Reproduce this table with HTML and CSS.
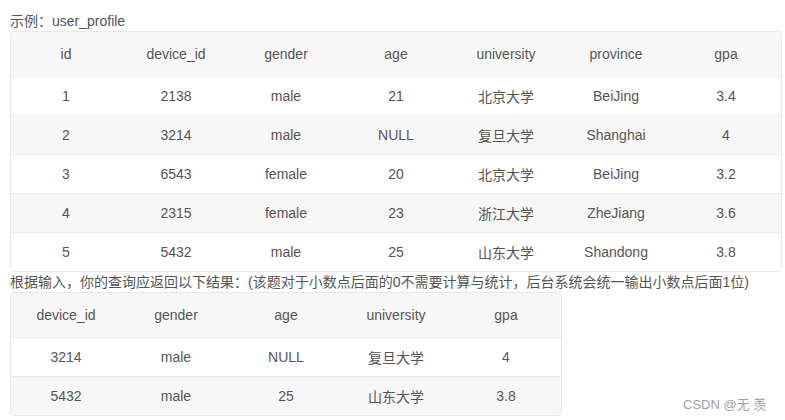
FILE: index.html
```html
<!DOCTYPE html>
<html lang="zh">
<head>
<meta charset="utf-8">
<link rel="stylesheet" href="styles.css">
</head>
<body>
<div class="page">
  <p class="caption">示例：user_profile</p>
  <table class="grid wide">
    <thead>
      <tr><th>id</th><th>device_id</th><th>gender</th><th>age</th><th>university</th><th>province</th><th>gpa</th></tr>
    </thead>
    <tbody>
      <tr><td>1</td><td>2138</td><td>male</td><td>21</td><td>北京大学</td><td>BeiJing</td><td>3.4</td></tr>
      <tr><td>2</td><td>3214</td><td>male</td><td>NULL</td><td>复旦大学</td><td>Shanghai</td><td>4</td></tr>
      <tr><td>3</td><td>6543</td><td>female</td><td>20</td><td>北京大学</td><td>BeiJing</td><td>3.2</td></tr>
      <tr><td>4</td><td>2315</td><td>female</td><td>23</td><td>浙江大学</td><td>ZheJiang</td><td>3.6</td></tr>
      <tr><td>5</td><td>5432</td><td>male</td><td>25</td><td>山东大学</td><td>Shandong</td><td>3.8</td></tr>
    </tbody>
  </table>
  <p class="caption">根据输入，你的查询应返回以下结果：(该题对于小数点后面的0不需要计算与统计，后台系统会统一输出小数点后面1位)</p>
  <table class="grid">
    <thead>
      <tr><th>device_id</th><th>gender</th><th>age</th><th>university</th><th>gpa</th></tr>
    </thead>
    <tbody>
      <tr><td>3214</td><td>male</td><td>NULL</td><td>复旦大学</td><td>4</td></tr>
      <tr><td>5432</td><td>male</td><td>25</td><td>山东大学</td><td>3.8</td></tr>
    </tbody>
  </table>
  <div class="watermark">CSDN @无 羡</div>
</div>
</body>
</html>
```
FILE: styles.css
```css
html, body {
  margin: 0;
  padding: 0;
  background: #fff;
}
body {
  font-family: "Liberation Sans", Arial, "Noto Sans CJK SC", sans-serif;
  font-size: 14px;
  color: #555;
}
.page {
  position: relative;
  width: 785px;
  height: 420px;
  padding: 11px 0 0 10px;
  box-sizing: border-box;
}
.caption {
  margin: 0;
  height: 20px;
  line-height: 20px;
  color: #555;
  white-space: nowrap;
}
.grid {
  border-collapse: separate;
  border-spacing: 0;
  border: 1px solid #e8e8e8;
  border-radius: 4px;
  overflow: hidden;
  table-layout: fixed;
}
.grid th, .grid td {
  width: 110px;
  padding: 0;
  text-align: center;
  font-weight: normal;
  color: #555;
}
.grid th {
  height: 44px;
  background: #f7f7f7;
}
.grid td {
  height: 38px;
  border-top: 1px solid #ececec;
}
.grid tbody tr:nth-child(even) td {
  background: #f7f7f7;
}
.watermark {
  position: absolute;
  left: 683px;
  top: 394px;
  font-size: 13px;
  color: #a0a0a0;
  white-space: nowrap;
}
```
